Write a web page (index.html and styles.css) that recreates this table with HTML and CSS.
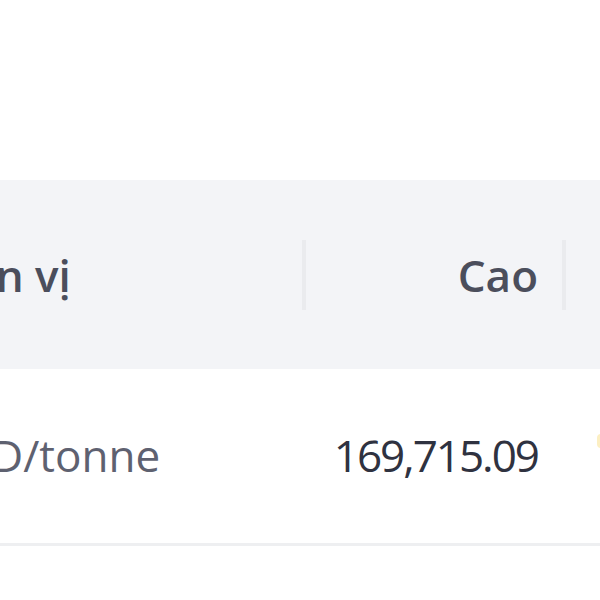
FILE: index.html
```html
<!DOCTYPE html>
<html lang="vi">
<head>
<meta charset="utf-8">
<title>Bảng giá</title>
<link rel="stylesheet" href="styles.css">
</head>
<body>
<div class="viewport">
  <div class="table">
    <div class="cell head sep">Đơn vị</div>
    <div class="cell head right sep">Cao</div>
    <div class="cell head"></div>
    <div class="gap gap-head"></div>
    <div class="cell head"></div>

    <div class="cell body unit">USD/tonne</div>
    <div class="cell body right num">169,715.09</div>
    <div class="cell body"></div>
    <div class="gap gap-body"></div>
    <div class="cell body next"><span class="dot"></span></div>
  </div>
</div>
</body>
</html>
```
FILE: styles.css
```css
html, body {
  margin: 0;
  padding: 0;
  background: #ffffff;
}
.viewport {
  width: 600px;
  height: 600px;
  overflow: hidden;
  padding-top: 180px;
  box-sizing: border-box;
}
.table {
  display: grid;
  grid-template-columns: 427px 260px 27px 3px 200px;
  grid-template-rows: 189px 177px;
  margin-left: -121px;
  font-family: "Open Sans", "Liberation Sans", sans-serif;
  font-size: 44px;
}
.cell {
  position: relative;
  display: flex;
  align-items: center;
  box-sizing: border-box;
  white-space: nowrap;
}
.head {
  background: #f3f4f7;
  color: #4b4e5c;
  font-weight: 600;
  padding-left: 56px;
}
.right {
  justify-content: flex-end;
  padding-left: 0;
  padding-right: 28px;
}
.sep::before {
  content: "";
  position: absolute;
  right: 0;
  top: 50%;
  width: 4px;
  height: 70px;
  margin-top: -35px;
  background: #eaebee;
}
.gap-head {
  background: #fafafb;
}
.gap-body {
  background: #ffffff;
  border-bottom: 3px solid #f8f8f9;
}
.body {
  border-bottom: 3px solid #eeeff1;
  padding-left: 56px;
  padding-bottom: 3px;
}
.body.right {
  padding-left: 0;
}
.unit {
  color: #5e6170;
  font-weight: 400;
}
.num {
  color: #2f3240;
  font-weight: 500;
  letter-spacing: -2px;
}
.next {
  padding-left: 0;
}
.dot {
  display: block;
  width: 8px;
  height: 14px;
  margin-left: 1px;
  margin-bottom: 28px;
  border-radius: 4px;
  background: #fcefc2;
}
```
